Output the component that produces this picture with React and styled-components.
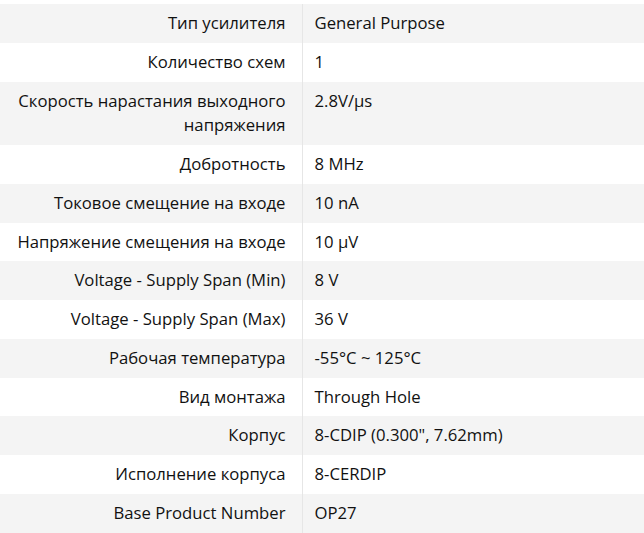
import styled, { createGlobalStyle } from 'styled-components'

const GlobalStyle = createGlobalStyle`
  html, body {
    margin: 0;
    padding: 0;
    background: #ffffff;
  }
  body {
    font-family: "Open Sans", "Noto Sans", sans-serif;
    color: #111111;
  }
`

const Wrapper = styled.div`
  width: 644px;
  padding-top: 4px;
`

const Table = styled.table`
  width: 100%;
  border-collapse: collapse;
  font-size: 16.7px;
  line-height: 24.75px;
`

const Row = styled.tr`
  background: ${({ $shaded }) => ($shaded ? '#f4f4f4' : '#ffffff')};
`

const Label = styled.th`
  width: 302px;
  box-sizing: border-box;
  padding: 7px 16px 7px 8px;
  text-align: right;
  vertical-align: top;
  font-weight: 400;
  border-right: 1px solid #e6e6e6;
`

const Value = styled.td`
  padding: 7px 8px 7px 12px;
  text-align: left;
  vertical-align: top;
`

const specs = [
  ['Тип усилителя', 'General Purpose'],
  ['Количество схем', '1'],
  ['Скорость нарастания выходного напряжения', '2.8V/µs'],
  ['Добротность', '8 MHz'],
  ['Токовое смещение на входе', '10 nA'],
  ['Напряжение смещения на входе', '10 µV'],
  ['Voltage - Supply Span (Min)', '8 V'],
  ['Voltage - Supply Span (Max)', '36 V'],
  ['Рабочая температура', '-55°C ~ 125°C'],
  ['Вид монтажа', 'Through Hole'],
  ['Корпус', '8-CDIP (0.300", 7.62mm)'],
  ['Исполнение корпуса', '8-CERDIP'],
  ['Base Product Number', 'OP27'],
]

export default function App() {
  return (
    <>
      <GlobalStyle />
      <Wrapper>
        <Table>
          <tbody>
            {specs.map(([name, value], i) => (
              <Row key={name} $shaded={i % 2 === 0}>
                <Label>{name}</Label>
                <Value>{value}</Value>
              </Row>
            ))}
          </tbody>
        </Table>
      </Wrapper>
    </>
  )
}
